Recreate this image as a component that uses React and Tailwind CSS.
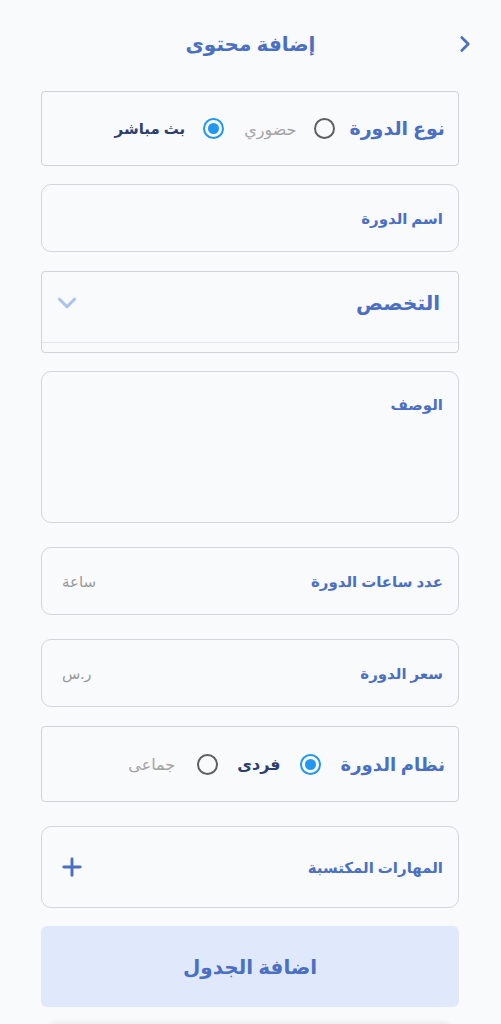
import { ChevronRight, ChevronDown, Plus } from 'lucide-react';

const font = { fontFamily: '"Noto Sans", "DejaVu Sans", sans-serif' };

function Radio({ checked, className = '' }) {
  return checked ? (
    <span className={`flex h-[21px] w-[21px] shrink-0 items-center justify-center rounded-full border-2 border-[#2196f3] ${className}`}>
      <span className="h-[11px] w-[11px] rounded-full bg-[#2196f3]" />
    </span>
  ) : (
    <span className={`block h-[21px] w-[21px] shrink-0 rounded-full border-2 border-[#5f5f5f] ${className}`} />
  );
}

function Field({ label, unit, className = '' }) {
  return (
    <div className={`flex h-[68px] items-center justify-between rounded-[10px] border border-[#d3d5da] pl-[20px] pr-[15px] ${className}`}>
      <span className="text-[15px] font-bold text-[#4a6fc3]">{label}</span>
      {unit && <span className="text-[15px] text-[#9a9a9a]">{unit}</span>}
    </div>
  );
}

export default function App() {
  return (
    <div dir="rtl" style={font} className="min-h-[1024px] w-[501px] overflow-hidden bg-[#f9fafb]">
      {/* Header */}
      <div className="relative flex h-[88px] items-center justify-center">
        <h1 className="text-[20px] font-bold text-[#4a6fc3]">إضافة محتوى</h1>
        <ChevronRight className="absolute right-[23px] top-[31px] h-[26px] w-[26px] text-[#4a6fc3]" strokeWidth={2.5} />
      </div>

      <div className="flex flex-col pl-[41px] pr-[42px]">
        {/* Course type */}
        <div className="mt-[3px] flex h-[75px] items-center rounded-[4px] border border-[#d0d2d6] pr-[13px]">
          <span className="text-[19px] font-bold text-[#4a6fc3]">نوع الدورة</span>
          <Radio className="mr-[14px]" />
          <span className="mr-[18px] text-[16px] text-[#a3a3a3]">حضوري</span>
          <Radio checked className="mr-[20px]" />
          <span className="mr-[18px] text-[15px] font-bold text-[#2d3f6e]">بث مباشر</span>
        </div>

        <Field label="اسم الدورة" className="mt-[18px]" />

        {/* Specialty select */}
        <div className="mt-[19px] flex h-[82px] flex-col rounded-[4px] border border-[#d0d2d6]">
          <div className="flex flex-1 items-center justify-between pb-[8px] pl-[10px] pr-[18px]">
            <span className="text-[20px] font-bold text-[#4a6fc3]">التخصص</span>
            <ChevronDown className="h-[30px] w-[30px] text-[#a8c4ec]" strokeWidth={2.5} />
          </div>
          <div className="h-[10px] border-t border-[#e3e4e7]" />
        </div>

        {/* Description */}
        <div className="mt-[18px] h-[152px] rounded-[10px] border border-[#d3d5da] px-[15px] pt-[20px]">
          <span className="text-[15px] font-bold text-[#4a6fc3]">الوصف</span>
        </div>

        <Field label="عدد ساعات الدورة" unit="ساعة" className="mt-[24px]" />
        <Field label="سعر الدورة" unit="ر.س" className="mt-[24px]" />

        {/* Course system */}
        <div className="mt-[19px] flex h-[76px] items-center rounded-[4px] border border-[#d0d2d6] pr-[13px]">
          <span className="text-[18px] font-bold text-[#4a6fc3]">نظام الدورة</span>
          <Radio checked className="mr-[20px]" />
          <span className="mr-[19px] text-[16px] font-bold text-[#2d3f6e]">فردى</span>
          <Radio className="mr-[19px]" />
          <span className="mr-[22px] text-[16px] text-[#a3a3a3]">جماعى</span>
        </div>

        {/* Skills */}
        <div className="mt-[24px] flex h-[82px] items-center justify-between rounded-[10px] border border-[#d3d5da] pl-[16px] pr-[15px]">
          <span className="text-[15px] font-bold text-[#4a6fc3]">المهارات المكتسبة</span>
          <Plus className="h-[28px] w-[28px] text-[#4a6fc3]" strokeWidth={2.5} />
        </div>

        {/* Add schedule */}
        <button className="mt-[18px] flex h-[81px] items-center justify-center rounded-[6px] bg-[#dfe9fb]">
          <span className="text-[20px] font-bold text-[#4a6fc3]">اضافة الجدول</span>
        </button>

        <div className="mx-[8px] mt-[17px] h-[20px] rounded-t-[6px] border-t-2 border-[#8a8f9c] bg-[#f4f6f9] shadow-[0_-2px_4px_rgba(0,0,0,0.06)]" />
      </div>
    </div>
  );
}
